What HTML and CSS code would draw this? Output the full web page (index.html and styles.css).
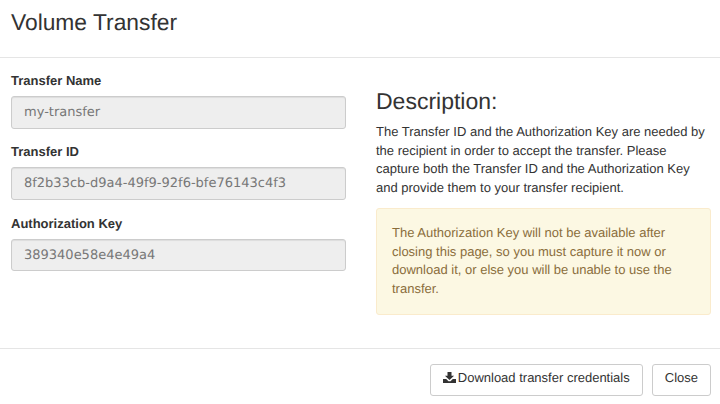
FILE: index.html
```html
<!DOCTYPE html>
<html lang="en">

<head>
    <meta charset="UTF-8">
    <title>Volume Transfer</title>
    <link rel="stylesheet" href="styles.css">
</head>

<body>
    <div class="modal-header">
        <h3 class="modal-title">Volume Transfer</h3>
    </div>

    <div class="modal-body">
        <div class="col-left">
            <div class="form-group">
                <label class="form-label">Transfer Name</label>
                <input class="form-control" type="text" value="my-transfer" readonly>
            </div>
            <div class="form-group">
                <label class="form-label">Transfer ID</label>
                <input class="form-control" type="text" value="8f2b33cb-d9a4-49f9-92f6-bfe76143c4f3" readonly>
            </div>
            <div class="form-group">
                <label class="form-label">Authorization Key</label>
                <input class="form-control" type="text" value="389340e58e4e49a4" readonly>
            </div>
        </div>
        <div class="col-right">
            <h3 class="desc-title">Description:</h3>
            <p class="desc-text">The Transfer ID and the Authorization Key are needed by the recipient in order to accept the transfer. Please capture both the Transfer ID and the Authorization Key and provide them to your transfer recipient.</p>
            <div class="alert">The Authorization Key will not be available after closing this page, so you must capture it now or download it, or else you will be unable to use the transfer.</div>
        </div>
    </div>

    <div class="modal-footer">
        <a class="btn" href="#">
            <svg class="icon" viewBox="0 0 13 11" width="13" height="11"><path d="M4.500 0h4v3.800h2.600L6.500 8 1.900 3.800h2.600z"/><path d="M0 7h3.200l2.300 2.200h2L9.800 7H13v4H0z"/></svg>
            Download transfer credentials
        </a>
        <a class="btn" href="#">Close</a>
    </div>
</body>

</html>
```

FILE: styles.css
```css
/* Reset */
* {
    margin: 0;
    padding: 0;
    box-sizing: border-box;
}

html,
body {
    height: 100%;
}

body {
    background-color: #fff;
    color: #333;
    font-family: "Liberation Sans", Arial, sans-serif;
    font-size: 13px;
    line-height: 1.428;
    text-rendering: geometricPrecision;
    overflow: hidden;
}

/* Header */
.modal-header {
    height: 58px;
    padding: 7px 11px 0;
    border-bottom: 1px solid #e5e5e5;
}

.modal-title {
    font-size: 22.8px;
    font-weight: 400;
    line-height: 30px;
}

/* Body */
.modal-body {
    display: flex;
    height: 290px;
    padding: 14px 9px 0 11px;
    gap: 30px;
}

.col-left {
    width: 335px;
    flex-shrink: 0;
}

.col-right {
    flex: 1;
    padding-top: 15px;
}

.form-group {
    margin-bottom: 14.8px;
}

.form-label {
    display: block;
    font-weight: 700;
    line-height: 17px;
    margin-bottom: 7px;
}

.form-control {
    display: block;
    width: 100%;
    height: 32.6px;
    padding: 0 12px;
    border: 1px solid #ccc;
    border-radius: 3px;
    background-color: #eee;
    box-shadow: inset 0 1px 1px rgba(0, 0, 0, .075);
    color: #777;
    font-family: "DejaVu Sans", sans-serif;
    font-size: 13px;
    text-rendering: geometricPrecision;
    outline: none;
}

.desc-title {
    font-size: 23px;
    font-weight: 400;
    line-height: 28px;
    margin-bottom: 8px;
}

.desc-text {
    margin-bottom: 11px;
}

.alert {
    height: 107px;
    padding: 15px;
    border: 1px solid #faebcc;
    border-radius: 3px;
    background-color: #fcf8e3;
    color: #8a6d3b;
}

/* Footer */
.modal-footer {
    display: flex;
    justify-content: flex-end;
    gap: 9px;
    height: 56px;
    padding: 15px 9px 0 0;
    border-top: 1px solid #e5e5e5;
}

.btn {
    display: inline-flex;
    align-items: center;
    gap: 2px;
    height: 32px;
    padding: 0 12px 3px;
    border: 1px solid #ccc;
    border-radius: 3px;
    background-color: #fff;
    color: #333;
    text-decoration: none;
}

.icon {
    margin-top: -2px;
    fill: #333;
}
```
